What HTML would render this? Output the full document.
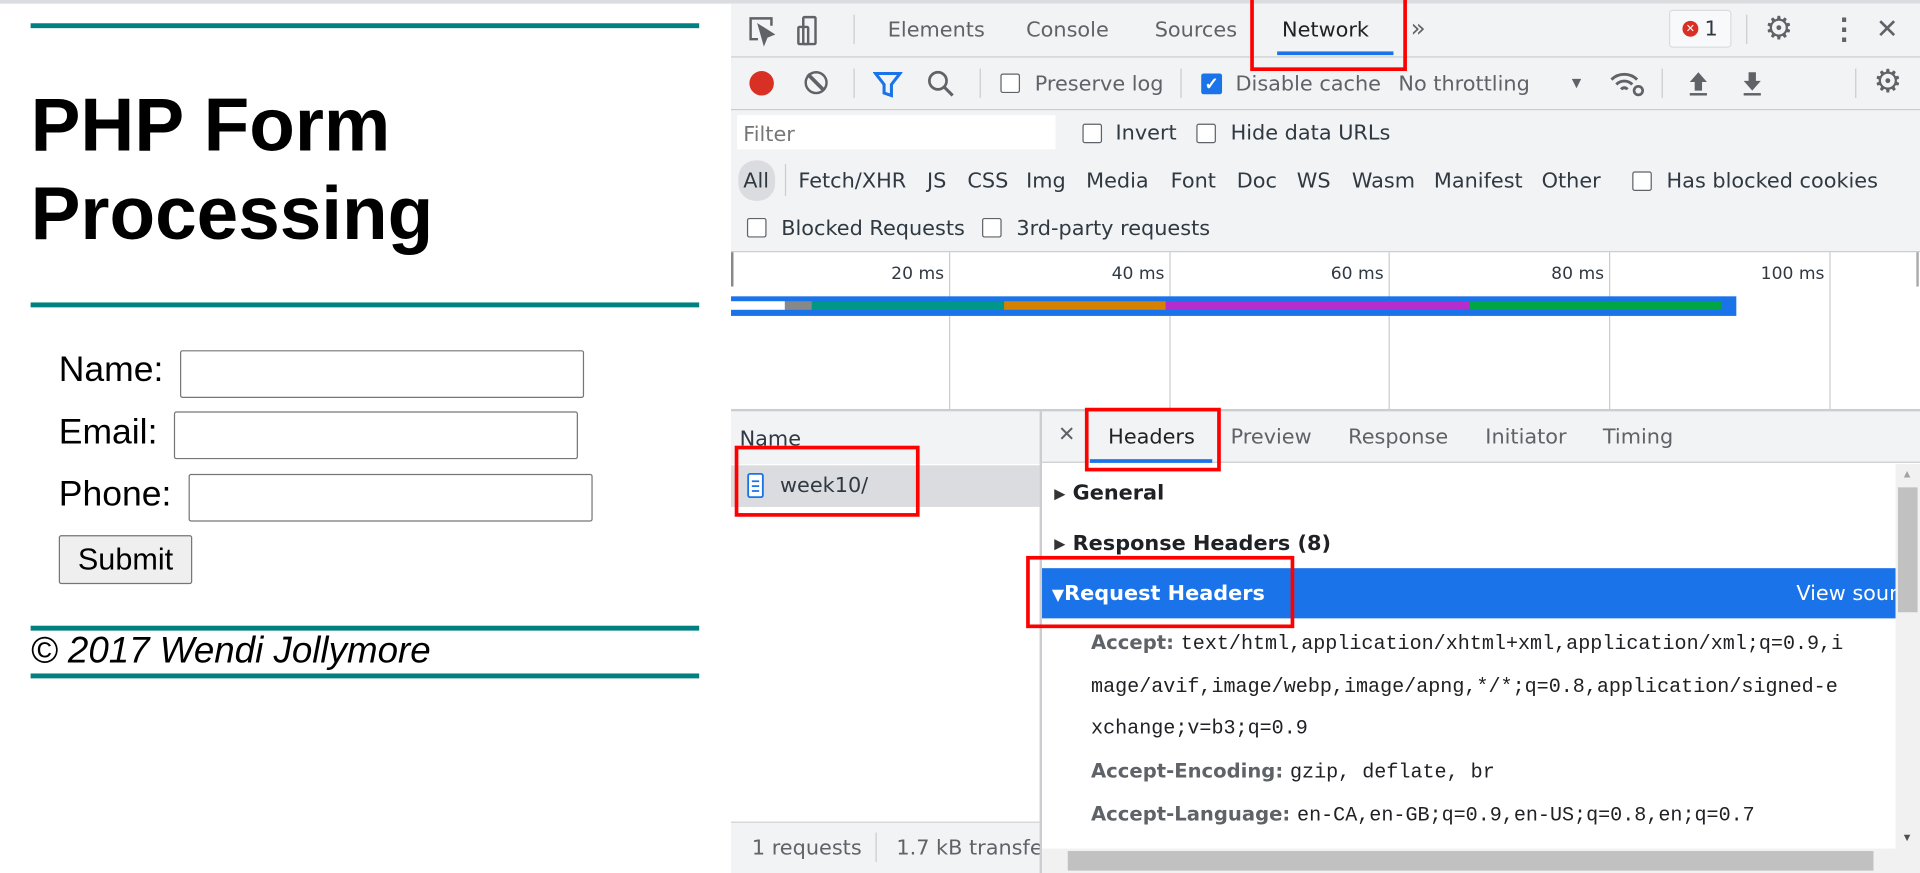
<!DOCTYPE html>
<html><head><meta charset="utf-8"><style>
*{box-sizing:border-box;margin:0;padding:0}
html,body{width:1920px;height:873px;overflow:hidden;background:#fff}
#w{position:absolute;left:0;top:0;width:1568px;height:713px;transform:scale(1.22449);transform-origin:0 0;font-family:"Liberation Sans",sans-serif;overflow:hidden}
.a{position:absolute;white-space:nowrap}
.teal{position:absolute;left:25px;width:546px;height:4px;background:#008080}
.inp{position:absolute;height:39px;border:1px solid #767676;border-radius:2px;background:#fff}
.dt{font-family:"DejaVu Sans","Liberation Sans",sans-serif;font-size:17px;color:#303942}
.cb{position:absolute;width:16px;height:16px;border:1.5px solid #5f6368;border-radius:2px;background:#fff}
.red{position:absolute;border:3px solid #f00}
.vl{position:absolute;width:1px;background:#ccc}
.mono{font-family:"Liberation Mono",monospace;font-size:16.4px;color:#202124}
.k{font-family:"DejaVu Sans",sans-serif;font-weight:bold;font-size:16px;color:#5f6368}
</style></head><body><div id="w">
<div class="a" style="left:0;top:0;width:1568px;height:3px;background:#dadce0"></div>
<!-- left page -->
<div class="teal" style="top:19px"></div>
<div class="a" style="left:25px;top:66px;font-size:61px;font-weight:bold;line-height:72px">PHP Form<br>Processing</div>
<div class="teal" style="top:247px"></div>
<div class="a" style="left:48px;top:286px;font-size:29px">Name:</div>
<div class="inp" style="left:147px;top:286px;width:330px"></div>
<div class="a" style="left:48px;top:337px;font-size:29px">Email:</div>
<div class="inp" style="left:142px;top:336px;width:330px"></div>
<div class="a" style="left:48px;top:388px;font-size:29px">Phone:</div>
<div class="inp" style="left:154px;top:387px;width:330px"></div>
<div class="a" style="left:48px;top:437px;width:109px;height:40px;border:1px solid #767676;border-radius:2px;background:#efefef;font-size:25px;text-align:center;line-height:38px">Submit</div>
<div class="teal" style="top:511px"></div>
<div class="a" style="left:25px;top:515px;font-size:30px;font-style:italic">© 2017 Wendi Jollymore</div>
<div class="teal" style="top:550px"></div>
<!-- devtools -->
<div class="a" style="left:597px;top:3px;width:971px;height:332px;background:#f1f3f4"></div>
<div class="a" style="left:597px;top:46px;width:971px;height:1px;background:#cbcdd1"></div>
<div class="a" style="left:597px;top:89px;width:971px;height:1px;background:#cbcdd1"></div>
<svg class="a" style="left:610px;top:12px" width="70" height="26" viewBox="0 0 70 26" fill="none" stroke="#5f6368" stroke-width="2"><path d="M9 20H3V3h17v6"/><path d="M10 9l4 14 2-5 5-2z" fill="#5f6368"/><rect x="46" y="2" width="10" height="22" rx="1"/><rect x="42" y="10" width="8" height="14" rx="1"/></svg>
<div class="a" style="left:697px;top:12px;width:1px;height:24px;background:#ccc"></div>
<div class="a dt" style="left:725px;top:15px;color:#5f6368">Elements</div>
<div class="a dt" style="left:838px;top:15px;color:#5f6368">Console</div>
<div class="a dt" style="left:943px;top:15px;color:#5f6368">Sources</div>
<div class="a dt" style="left:1047px;top:15px;color:#202124">Network</div>
<div class="a" style="left:1043px;top:42px;width:95px;height:3px;background:#1a73e8"></div>
<div class="a dt" style="left:1152px;top:11px;font-size:20px;color:#5f6368">»</div>
<div class="a" style="left:1363px;top:8px;width:51px;height:31px;border:1px solid #dadce0;border-radius:3px;background:#f8f9fa"></div>
<div class="a" style="left:1374px;top:17px;width:13px;height:13px;border-radius:50%;background:#d93025;color:#fff;font-size:9px;text-align:center;line-height:13px">✕</div>
<div class="a dt" style="left:1392px;top:14px">1</div>
<div class="a" style="left:1426px;top:12px;width:1px;height:24px;background:#ccc"></div>
<div class="a" style="left:1441px;top:8px;font-size:26px;color:#5f6368">⚙</div>
<div class="a" style="left:1494px;top:10px;font-size:24px;color:#5f6368;font-weight:bold">⋮</div>
<div class="a" style="left:1532px;top:11px;font-size:22px;color:#5f6368">✕</div>
<!-- toolbar -->
<div class="a" style="left:612px;top:58px;width:20px;height:20px;border-radius:50%;background:#d93025"></div>
<div class="a" style="left:657px;top:58px;width:19px;height:19px;border-radius:50%;border:2.5px solid #5f6368"><div style="position:absolute;left:6px;top:-2px;width:2.5px;height:19px;background:#5f6368;transform:rotate(-45deg)"></div></div>
<div class="a" style="left:697px;top:56px;width:1px;height:24px;background:#ccc"></div>
<svg class="a" style="left:713px;top:58px" width="24" height="22"><path d="M2 2h20l-7 9v9l-6-2v-7z" fill="none" stroke="#1a73e8" stroke-width="2.5"/></svg>
<svg class="a" style="left:757px;top:57px" width="24" height="24"><circle cx="9" cy="9" r="7" fill="none" stroke="#5f6368" stroke-width="2.2"/><path d="M14 14l7 7" stroke="#5f6368" stroke-width="2.5"/></svg>
<div class="a" style="left:800px;top:56px;width:1px;height:24px;background:#ccc"></div>
<div class="cb" style="left:817px;top:60px"></div>
<div class="a dt" style="left:845px;top:59px;color:#5f6368">Preserve log</div>
<div class="a" style="left:964px;top:56px;width:1px;height:24px;background:#ccc"></div>
<div class="a" style="left:981px;top:60px;width:17px;height:17px;border-radius:2px;background:#1a73e8;color:#fff;font-size:14px;text-align:center;line-height:17px;font-weight:bold">✓</div>
<div class="a dt" style="left:1009px;top:59px;color:#5f6368">Disable cache</div>
<div class="a dt" style="left:1142px;top:59px;color:#5f6368">No throttling</div>
<div class="a" style="left:1281px;top:60px;font-size:13px;color:#5f6368">▼</div>
<svg class="a" style="left:1314px;top:56px" width="30" height="24"><path d="M2 9a15 15 0 0 1 21 0M6 13a9 9 0 0 1 13 0M10 17a3 3 0 0 1 5 0" fill="none" stroke="#5f6368" stroke-width="2.4"/><circle cx="24" cy="18" r="3.5" fill="none" stroke="#5f6368" stroke-width="2.2"/></svg>
<div class="a" style="left:1357px;top:56px;width:1px;height:24px;background:#ccc"></div>
<svg class="a" style="left:1377px;top:57px" width="20" height="22"><path d="M10 2l7 8h-4v7H7v-7H3z" fill="#5f6368"/><rect x="3" y="19" width="14" height="2" fill="#5f6368"/></svg>
<svg class="a" style="left:1421px;top:57px" width="20" height="22"><path d="M10 17l7-8h-4V2H7v7H3z" fill="#5f6368"/><rect x="3" y="19" width="14" height="2" fill="#5f6368"/></svg>
<div class="a" style="left:1515px;top:56px;width:1px;height:24px;background:#ccc"></div>
<div class="a" style="left:1530px;top:51px;font-size:26px;color:#5f6368">⚙</div>
<!-- filter -->
<div class="a" style="left:602px;top:94px;width:260px;height:28px;background:#fff"></div>
<div class="a dt" style="left:607px;top:100px;color:#777">Filter</div>
<div class="cb" style="left:884px;top:101px"></div>
<div class="a dt" style="left:911px;top:99px">Invert</div>
<div class="cb" style="left:977px;top:101px"></div>
<div class="a dt" style="left:1005px;top:99px">Hide data URLs</div>
<div class="a" style="left:603px;top:131px;width:30px;height:33px;border-radius:14px;background:#dadce0"></div>
<div class="a" style="left:641px;top:134px;width:1px;height:26px;background:#ccc"></div>
<div class="a dt" style="left:607px;top:138px">All</div>
<div class="a dt" style="left:652px;top:138px">Fetch/XHR</div>
<div class="a dt" style="left:757px;top:138px">JS</div>
<div class="a dt" style="left:790px;top:138px">CSS</div>
<div class="a dt" style="left:838px;top:138px">Img</div>
<div class="a dt" style="left:887px;top:138px">Media</div>
<div class="a dt" style="left:956px;top:138px">Font</div>
<div class="a dt" style="left:1010px;top:138px">Doc</div>
<div class="a dt" style="left:1059px;top:138px">WS</div>
<div class="a dt" style="left:1104px;top:138px">Wasm</div>
<div class="a dt" style="left:1171px;top:138px">Manifest</div>
<div class="a dt" style="left:1259px;top:138px">Other</div>
<div class="cb" style="left:1333px;top:140px"></div>
<div class="a dt" style="left:1361px;top:138px">Has blocked cookies</div>
<div class="cb" style="left:610px;top:178px"></div>
<div class="a dt" style="left:638px;top:177px">Blocked Requests</div>
<div class="cb" style="left:802px;top:178px"></div>
<div class="a dt" style="left:830px;top:177px">3rd-party requests</div>
<!-- timeline -->
<div class="a" style="left:597px;top:205px;width:971px;height:129px;background:#fff;border-top:1px solid #cbcdd1"></div>
<div class="a" style="left:597px;top:206px;width:2px;height:28px;background:#888"></div>
<div class="a" style="left:1565px;top:206px;width:2px;height:28px;background:#aaa"></div>
<div class="vl" style="left:775px;top:206px;height:128px"></div>
<div class="vl" style="left:955px;top:206px;height:128px"></div>
<div class="vl" style="left:1134px;top:206px;height:128px"></div>
<div class="vl" style="left:1314px;top:206px;height:128px"></div>
<div class="vl" style="left:1494px;top:206px;height:128px"></div>
<div class="a dt" style="left:705px;top:216px;width:66px;text-align:right;font-size:14px">20 ms</div>
<div class="a dt" style="left:885px;top:216px;width:66px;text-align:right;font-size:14px">40 ms</div>
<div class="a dt" style="left:1064px;top:216px;width:66px;text-align:right;font-size:14px">60 ms</div>
<div class="a dt" style="left:1244px;top:216px;width:66px;text-align:right;font-size:14px">80 ms</div>
<div class="a dt" style="left:1424px;top:216px;width:66px;text-align:right;font-size:14px">100 ms</div>
<div class="a" style="left:597px;top:242px;width:821px;height:16px;background:#1a73e8"></div>
<div class="a" style="left:597px;top:246px;width:44px;height:7px;background:#fff"></div>
<div class="a" style="left:641px;top:246px;width:22px;height:7px;background:#888"></div>
<div class="a" style="left:663px;top:246px;width:157px;height:7px;background:#009688"></div>
<div class="a" style="left:820px;top:246px;width:132px;height:7px;background:#d68100"></div>
<div class="a" style="left:952px;top:246px;width:248px;height:7px;background:#b52dcd"></div>
<div class="a" style="left:1200px;top:246px;width:206px;height:7px;background:#00a544"></div>
<!-- bottom -->
<div class="a" style="left:597px;top:334px;width:971px;height:2px;background:#cbcdd1"></div>
<div class="a" style="left:597px;top:336px;width:252px;height:377px;background:#fff"></div>
<div class="a" style="left:597px;top:336px;width:252px;height:43px;background:#f1f3f4"></div>
<div class="a dt" style="left:604px;top:349px">Name</div>
<div class="a" style="left:597px;top:380px;width:252px;height:34px;background:#dadce0"></div>
<svg class="a" style="left:610px;top:386px" width="14" height="22"><rect x="1" y="1" width="12" height="19" rx="1.5" fill="#fff" stroke="#1a73e8" stroke-width="1.5"/><path d="M4 7h6M4 11h6M4 15h6" stroke="#1a73e8" stroke-width="1.4"/></svg>
<div class="a dt" style="left:637px;top:387px">week10/</div>
<div class="a" style="left:597px;top:671px;width:252px;height:1px;background:#cbcdd1"></div>
<div class="a" style="left:597px;top:672px;width:252px;height:41px;background:#f1f3f4"></div>
<div class="a dt" style="left:614px;top:683px;color:#5f6368">1 requests</div>
<div class="a" style="left:715px;top:680px;width:1px;height:24px;background:#ccc"></div>
<div class="a dt" style="left:732px;top:683px;color:#5f6368">1.7 kB transfe</div>
<div class="a" style="left:849px;top:336px;width:2px;height:377px;background:#cbcdd1"></div>
<div class="a" style="left:851px;top:336px;width:717px;height:42px;background:#f1f3f4;border-bottom:1px solid #cbcdd1"></div>
<div class="a dt" style="left:864px;top:345px;color:#5f6368">✕</div>
<div class="a dt" style="left:905px;top:347px;color:#202124">Headers</div>
<div class="a" style="left:890px;top:375px;width:100px;height:3px;background:#1a73e8"></div>
<div class="a dt" style="left:1005px;top:347px;color:#5f6368">Preview</div>
<div class="a dt" style="left:1101px;top:347px;color:#5f6368">Response</div>
<div class="a dt" style="left:1213px;top:347px;color:#5f6368">Initiator</div>
<div class="a dt" style="left:1309px;top:347px;color:#5f6368">Timing</div>
<div class="a" style="left:851px;top:379px;width:697px;height:314px;background:#fff"></div>
<div class="a" style="left:861px;top:396px;font-size:12px;color:#333">▶</div>
<div class="a dt" style="left:876px;top:393px;font-weight:bold;color:#202124">General</div>
<div class="a" style="left:861px;top:437px;font-size:12px;color:#333">▶</div>
<div class="a dt" style="left:876px;top:434px;font-weight:bold;color:#202124">Response Headers (8)</div>
<div class="a" style="left:851px;top:464px;width:697px;height:41px;background:#1a73e8;overflow:hidden">
<div class="a dt" style="left:8px;top:11px;color:#fff;font-weight:bold"><span style="font-size:13px">▼</span>Request Headers</div>
<div class="a dt" style="left:616px;top:11px;color:#fff">View source</div></div>
<div class="a" style="left:891px;top:508px;line-height:34.5px;width:657px;overflow:hidden">
<div style="white-space:nowrap"><span class="k">Accept: </span><span class="mono">text/html,application/xhtml+xml,application/xml;q=0.9,i</span></div>
<div class="mono">mage/avif,image/webp,image/apng,*/*;q=0.8,application/signed-e</div>
<div class="mono">xchange;v=b3;q=0.9</div>
<div style="white-space:nowrap"><span class="k">Accept-Encoding: </span><span class="mono">gzip, deflate, br</span></div>
<div style="white-space:nowrap"><span class="k">Accept-Language: </span><span class="mono">en-CA,en-GB;q=0.9,en-US;q=0.8,en;q=0.7</span></div>
<div style="white-space:nowrap"><span class="k">Cache-Control: </span><span class="mono">no-cache</span></div>
</div>
<div class="a" style="left:1548px;top:379px;width:20px;height:314px;background:#f1f1f1"></div>
<div class="a" style="left:1550px;top:398px;width:16px;height:102px;background:#c1c1c1"></div>
<div class="a" style="left:1553px;top:382px;font-size:9px;color:#a3a3a3">▲</div>
<div class="a" style="left:1553px;top:679px;font-size:9px;color:#505050">▼</div>
<div class="a" style="left:851px;top:693px;width:717px;height:20px;background:#f1f1f1"></div>
<div class="a" style="left:872px;top:695px;width:658px;height:16px;background:#c1c1c1"></div>
<!-- red boxes -->
<div class="red" style="left:1021px;top:-3px;width:128px;height:61px"></div>
<div class="red" style="left:600px;top:364px;width:151px;height:58px"></div>
<div class="red" style="left:886px;top:333px;width:111px;height:52px"></div>
<div class="red" style="left:838px;top:454px;width:219px;height:59px"></div>
</div></body></html>
